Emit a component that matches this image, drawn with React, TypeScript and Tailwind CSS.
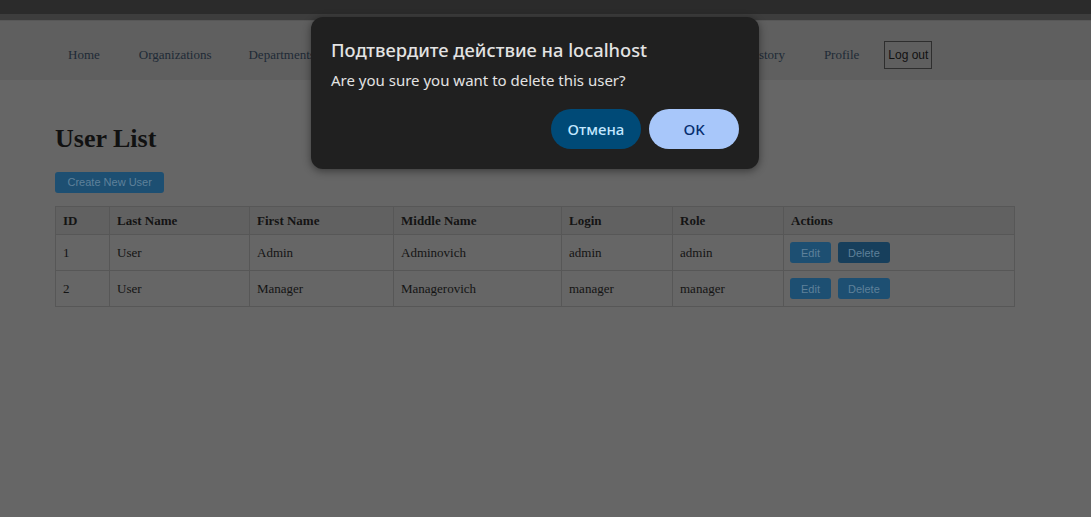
import React from "react";

const serif = { fontFamily: '"Liberation Serif", "Times New Roman", serif' };
const sans = { fontFamily: '"Liberation Sans", Arial, sans-serif' };
const ui = { fontFamily: '"Noto Sans", "Open Sans", sans-serif' };

const rows = [
  { id: "1", last: "User", first: "Admin", middle: "Adminovich", login: "admin", role: "admin", hover: true },
  { id: "2", last: "User", first: "Manager", middle: "Managerovich", login: "manager", role: "manager", hover: false },
];

const cols = ["w-[54px]", "w-[140px]", "w-[144px]", "w-[168px]", "w-[111px]", "w-[111px]", ""];

export default function App() {
  return (
    <div className="relative min-h-[517px] w-full bg-[#666666] overflow-hidden" style={serif}>
      <div className="h-[14px] bg-[#2b2b2b]" />
      <div className="h-[6px] bg-[#3d3d3d]" />
      <nav className="h-[60px] bg-[#5f5f5f] border-t border-[#575757] flex items-center pt-[8px] pl-[68px]">
        <div className="flex items-center text-[13px] text-[#1e2a36] whitespace-nowrap">
          <span>Home</span>
          <span className="ml-[39px]">Organizations</span>
          <span className="ml-[37px]">Departments</span>
          <span className="w-[431px] shrink-0" />
          <span>History</span>
          <span className="ml-[39px]">Profile</span>
        </div>
        <button
          className="ml-[25px] h-[28px] px-[3px] border border-[#2e2e2e] text-[12px] text-[#111] bg-transparent"
          style={sans}
        >
          Log out
        </button>
      </nav>

      <main className="px-[55px] pt-[44px]">
        <h1 className="text-[26px] leading-[30px] font-bold text-[#111]">User List</h1>
        <button
          className="mt-[18px] h-[21px] px-[12.5px] rounded-[3px] bg-[#1d4f72] text-[11px] text-[#5f819a]"
          style={sans}
        >
          Create New User
        </button>
        <table className="mt-[13px] w-[960px] border-collapse text-[13px] text-[#141414]">
          <thead>
            <tr className="bg-[#616161]">
              {["ID", "Last Name", "First Name", "Middle Name", "Login", "Role", "Actions"].map((h, i) => (
                <th key={h} className={`${cols[i]} border border-[#575757] px-[7px] h-[28px] text-left font-bold`}>
                  {h}
                </th>
              ))}
            </tr>
          </thead>
          <tbody>
            {rows.map((r) => (
              <tr key={r.id}>
                {[r.id, r.last, r.first, r.middle, r.login, r.role].map((v, i) => (
                  <td key={i} className="border border-[#575757] px-[7px] h-[36px]">
                    {v}
                  </td>
                ))}
                <td className="border border-[#575757] px-[6px] h-[36px]">
                  <div className="flex gap-[7px]" style={sans}>
                    <button className="h-[21px] px-[11px] rounded-[3px] bg-[#1d4f72] text-[11px] text-[#5f819a]">Edit</button>
                    <button
                      className={`h-[21px] px-[10px] rounded-[3px] text-[11px] text-[#5f819a] ${r.hover ? "bg-[#173f5c]" : "bg-[#1d4f72]"}`}
                    >
                      Delete
                    </button>
                  </div>
                </td>
              </tr>
            ))}
          </tbody>
        </table>
      </main>

      <div
        className="absolute left-[311px] top-[17px] w-[448px] h-[152px] rounded-[12px] bg-[#202020] shadow-[0_2px_8px_rgba(0,0,0,0.45)] px-[20px] pt-[21px] pb-[20px] flex flex-col"
        style={ui}
      >
        <div className="text-[18.3px] leading-[24px] font-medium text-[#e3e3e3]">Подтвердите действие на localhost</div>
        <div className="mt-[8px] text-[15px] leading-[20px] text-[#e3e3e3]">Are you sure you want to delete this user?</div>
        <div className="mt-auto flex justify-end gap-[8px]">
          <button className="w-[90px] h-[40px] rounded-full bg-[#004a77] text-[#c2e7ff] text-[15px] font-medium">Отмена</button>
          <button className="w-[90px] h-[40px] rounded-full bg-[#a8c7fa] text-[#062e6f] text-[15px] font-medium">OK</button>
        </div>
      </div>
    </div>
  );
}
